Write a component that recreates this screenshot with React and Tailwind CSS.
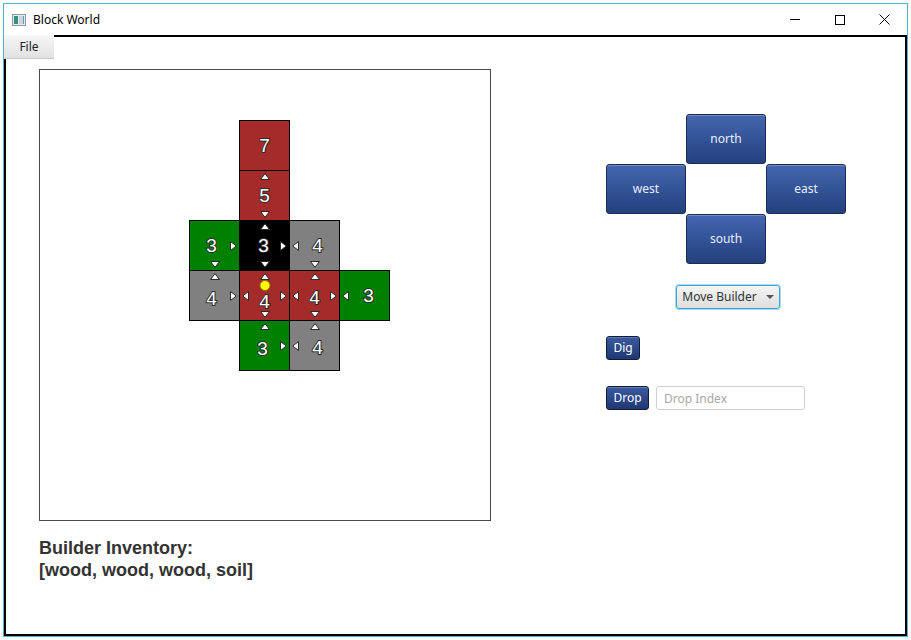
import React from 'react';

const FONT = "font-['Noto_Sans',sans-serif]";

const COLORS = {
  red: 'bg-[#a52a2a]',
  green: 'bg-[#008000]',
  gray: 'bg-[#808080]',
  black: 'bg-black',
};

// col / row start classes written out so Tailwind picks them up
const COL = ['col-start-1', 'col-start-2', 'col-start-3', 'col-start-4'];
const ROW = ['row-start-1', 'row-start-2', 'row-start-3', 'row-start-4', 'row-start-5'];

const blocks = [
  { c: 1, r: 0, color: 'red', n: 7, arrows: [] },
  { c: 1, r: 1, color: 'red', n: 5, arrows: ['up', 'down'] },
  { c: 0, r: 2, color: 'green', n: 3, arrows: ['right', 'down'], dx: '-ml-[6px]' },
  { c: 1, r: 2, color: 'black', n: 3, arrows: ['up', 'down', 'right'], dx: '-ml-[2px]' },
  { c: 2, r: 2, color: 'gray', n: 4, arrows: ['left', 'down'], dx: 'ml-[6px]' },
  { c: 0, r: 3, color: 'gray', n: 4, arrows: ['up', 'right'], dx: '-ml-[6px]', dy: 'mt-[6px]' },
  { c: 1, r: 3, color: 'red', n: 4, arrows: ['up', 'down', 'left', 'right'], dot: true, dy: 'mt-[12px]' },
  { c: 2, r: 3, color: 'red', n: 4, arrows: ['up', 'down', 'left', 'right'], dy: 'mt-[4px]' },
  { c: 3, r: 3, color: 'green', n: 3, arrows: ['left'], dx: 'ml-[8px]' },
  { c: 1, r: 4, color: 'green', n: 3, arrows: ['up', 'right'], dx: '-ml-[4px]', dy: 'mt-[6px]' },
  { c: 2, r: 4, color: 'gray', n: 4, arrows: ['up', 'left'], dx: 'ml-[6px]', dy: 'mt-[4px]' },
];

const Arrow = ({ dir }) => {
  const pos = {
    up: 'top-[2px] left-1/2 -translate-x-1/2',
    down: 'bottom-[2px] left-1/2 -translate-x-1/2',
    left: 'left-[2px] top-1/2 -translate-y-1/2',
    right: 'right-[2px] top-1/2 -translate-y-1/2',
  }[dir];
  const vertical = dir === 'up' || dir === 'down';
  const pts = {
    up: '5,0.7 9.5,6.5 0.5,6.5',
    down: '0.5,0.5 9.5,0.5 5,6.3',
    left: '6.5,0.5 6.5,9.5 0.7,5',
    right: '0.5,0.5 6.3,5 0.5,9.5',
  }[dir];
  return (
    <svg
      className={`absolute ${pos}`}
      width={vertical ? 10 : 7}
      height={vertical ? 7 : 10}
      viewBox={vertical ? '0 0 10 7' : '0 0 7 10'}
    >
      <polygon points={pts} fill="#fff" stroke="#2a2a2a" strokeWidth="1" />
    </svg>
  );
};

const Block = ({ b }) => (
  <div
    className={`${COL[b.c]} ${ROW[b.r]} relative w-[51px] h-[51px] border border-black ${COLORS[b.color]} flex items-center justify-center`}
  >
    {b.arrows.map((a) => (
      <Arrow key={a} dir={a} />
    ))}
    {b.dot && (
      <div className="absolute top-[9px] left-1/2 -translate-x-1/2 w-[11px] h-[11px] rounded-full bg-[#ffff00] border border-[#8a7a00]" />
    )}
    <span
      className={`${b.dx || ''} ${b.dy || ''} font-['Liberation_Sans',Arial,sans-serif] text-[19px] leading-none text-white [-webkit-text-stroke:2px_#2a2a2a] [paint-order:stroke_fill]`}
    >
      {b.n}
    </span>
  </div>
);

const PadButton = ({ label, className }) => (
  <button
    className={`${className} w-[80px] h-[50px] rounded-[3px] border border-[#1c2b52] bg-gradient-to-b from-[#4467b0] to-[#24407e] shadow-[inset_0_1px_0_rgba(255,255,255,0.25)] text-[12px] text-[#e8eefa] ${FONT}`}
  >
    {label}
  </button>
);

const SmallButton = ({ label, className }) => (
  <button
    className={`${className} h-[24px] rounded-[3px] border border-[#111b33] bg-gradient-to-b from-[#3a5aa2] to-[#1f3872] shadow-[inset_0_1px_0_rgba(255,255,255,0.2)] text-[12px] text-white ${FONT}`}
  >
    {label}
  </button>
);

const App = () => {
  return (
    <div className="w-[911px] h-[640px] bg-white pl-[3px] pt-[3px]">
      <div className="w-[905px] h-[634px] border border-[#4eb2c8] flex flex-col bg-white">
        {/* title bar */}
        <div className="h-[31px] flex items-center shrink-0">
          <svg className="ml-[8px]" width="14" height="12" viewBox="0 0 14 12">
            <rect x="0.5" y="0.5" width="13" height="11" fill="#e8ecef" stroke="#8a9aa6" />
            <rect x="2" y="2" width="4" height="8" fill="#3b8d7f" />
            <rect x="7" y="2" width="5" height="8" fill="#c9d6de" />
            <rect x="11" y="2" width="1" height="8" fill="#6a95c8" />
          </svg>
          <span className={`ml-[7px] text-[12px] text-black ${FONT}`}>Block World</span>
          <div className="ml-auto flex items-center h-full">
            <div className="w-[45px] h-full flex items-center justify-center">
              <div className="w-[10px] h-px bg-black" />
            </div>
            <div className="w-[45px] h-full flex items-center justify-center">
              <div className="w-[10px] h-[10px] border border-black" />
            </div>
            <div className="w-[45px] h-full flex items-center justify-center">
              <svg width="11" height="11" viewBox="0 0 11 11">
                <path d="M0.5 0.5 L10.5 10.5 M10.5 0.5 L0.5 10.5" stroke="#000" strokeWidth="1" />
              </svg>
            </div>
          </div>
        </div>

        {/* scene */}
        <div className="relative flex-1 border-2 border-black flex flex-col">
          <div
            className={`absolute -top-[2px] -left-[2px] w-[50px] h-[24px] bg-gradient-to-b from-[#f6f6f6] to-[#e2e2e2] border-b border-[#c8c8c8] flex items-center justify-center text-[12px] text-[#222] ${FONT}`}
          >
            File
          </div>

          <div className="flex">
            <div className="ml-[33px] mt-[32px]">
              <div className="w-[452px] h-[452px] border border-[#4a4a4a] bg-white">
                <div className="ml-[149px] mt-[50px] grid grid-cols-[repeat(4,50px)] grid-rows-[repeat(5,50px)]">
                  {blocks.map((b, i) => (
                    <Block key={i} b={b} />
                  ))}
                </div>
              </div>
              <div className="mt-[16px] font-['Liberation_Sans',Arial,sans-serif] font-bold text-[18px] leading-[22px] text-[#333]">
                <div>Builder Inventory:</div>
                <div>[wood, wood, wood, soil]</div>
              </div>
            </div>

            <div className="ml-[115px] mt-[77px] flex flex-col">
              <div className="grid grid-cols-[repeat(3,80px)] grid-rows-[repeat(3,50px)]">
                <PadButton label="north" className="col-start-2 row-start-1" />
                <PadButton label="west" className="col-start-1 row-start-2" />
                <PadButton label="east" className="col-start-3 row-start-2" />
                <PadButton label="south" className="col-start-2 row-start-3" />
              </div>

              <button
                className={`ml-[70px] mt-[21px] w-[104px] h-[24px] rounded-[3px] border border-[#3aa5d9] shadow-[0_0_0_1px_#a9d8f0] bg-gradient-to-b from-[#f5f5f5] to-[#dedede] flex items-center justify-center gap-[9px] text-[12px] text-[#333] ${FONT}`}
              >
                <span>Move Builder</span>
                <svg width="8" height="4" viewBox="0 0 8 4">
                  <polygon points="0,0 8,0 4,4" fill="#555" />
                </svg>
              </button>

              <SmallButton label="Dig" className="mt-[27px] w-[34px]" />

              <div className="mt-[26px] flex items-center gap-[7px]">
                <SmallButton label="Drop" className="w-[43px]" />
                <input
                  placeholder="Drop Index"
                  className={`w-[149px] h-[24px] rounded-[3px] border border-[#cfcfcf] bg-white px-[7px] text-[12px] placeholder:text-[#a8a8a8] outline-none ${FONT}`}
                />
              </div>
            </div>
          </div>
        </div>
      </div>
    </div>
  );
};

export default App;
